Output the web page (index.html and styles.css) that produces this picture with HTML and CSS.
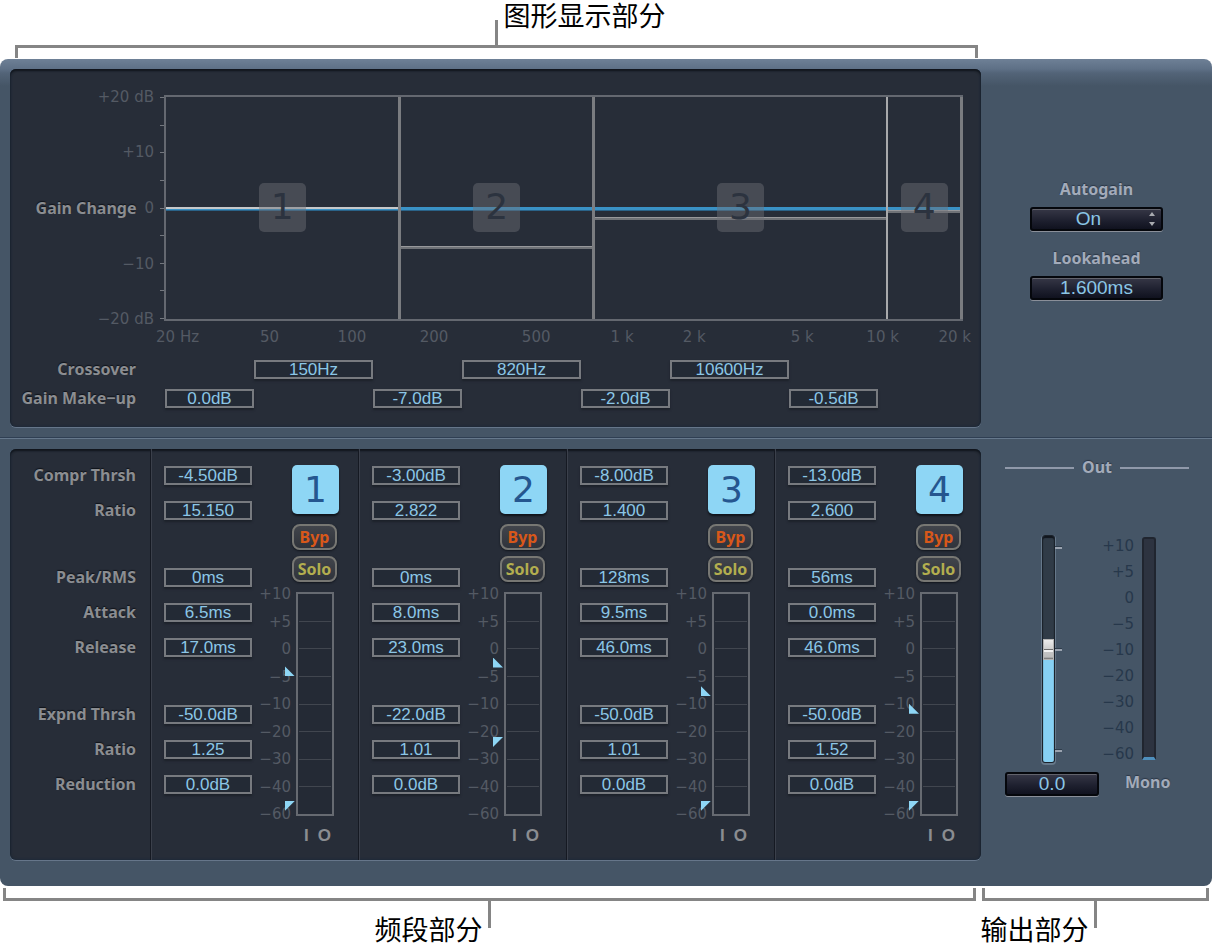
FILE: index.html
```html
<!DOCTYPE html>
<html lang="zh-CN">

<head>
    <meta charset="UTF-8" />
    <meta name="viewport" content="width=device-width, initial-scale=1.0" />
    <title>Multipressor</title>
    <link rel="stylesheet" href="styles.css">
</head>

<body>
    <div class="callout callout-top">
        <div class="callout-text">图形显示部分</div>
        <div class="bracket bracket-down"></div>
    </div>

    <main class="plugin">
        <section class="upper">
            <div class="panel display">
                <div class="graph">
                    <div class="y-axis">
                        <span>+20 dB</span>
                        <span>+10</span>
                        <span class="y-zero"><b class="label">Gain Change</b>0</span>
                        <span>−10</span>
                        <span>−20 dB</span>
                    </div>
                    <div class="ticks"><i></i><i></i><i></i><i></i><i></i><i></i><i></i><i></i><i></i></div>
                    <div class="plot">
                        <div class="zone">
                            <div class="zero-line"></div>
                            <div class="gain-line" style="top: 50%"></div>
                            <span class="zone-number">1</span>
                        </div>
                        <div class="zone">
                            <div class="zero-line"></div>
                            <div class="gain-line" style="top: 67%"></div>
                            <span class="zone-number">2</span>
                        </div>
                        <div class="zone">
                            <div class="zero-line"></div>
                            <div class="gain-line" style="top: 54%"></div>
                            <span class="zone-number">3</span>
                        </div>
                        <div class="zone">
                            <div class="zero-line"></div>
                            <div class="gain-line" style="top: 51%"></div>
                            <span class="zone-number">4</span>
                        </div>
                    </div>
                </div>
                <div class="x-axis">
                    <span>20 Hz</span>
                    <span>50</span>
                    <span>100</span>
                    <span>200</span>
                    <span>500</span>
                    <span>1 k</span>
                    <span>2 k</span>
                    <span>5 k</span>
                    <span>10 k</span>
                    <span>20 k</span>
                </div>
                <div class="settings">
                    <label class="label" id="l-cross" for="cross1">Crossover</label>
                    <input class="field cross1" id="cross1" type="text" value="150Hz">
                    <input class="field cross2" aria-labelledby="l-cross" type="text" value="820Hz">
                    <input class="field cross3" aria-labelledby="l-cross" type="text" value="10600Hz">
                </div>
                <div class="settings">
                    <label class="label" id="l-gain" for="gain1">Gain Make−up</label>
                    <input class="field gain1" id="gain1" type="text" value="0.0dB">
                    <input class="field gain2" aria-labelledby="l-gain" type="text" value="-7.0dB">
                    <input class="field gain3" aria-labelledby="l-gain" type="text" value="-2.0dB">
                    <input class="field gain4" aria-labelledby="l-gain" type="text" value="-0.5dB">
                </div>
            </div>
            <div class="side options">
                <label class="label" for="autogain">Autogain</label>
                <div class="select-wrap">
                    <select class="lcd" id="autogain">
                        <option>On</option>
                        <option>Off</option>
                    </select>
                    <svg class="arrows" viewBox="0 0 6 14" width="6" height="14">
                        <path d="M3 0 L6 4 H0 Z M0 10 H6 L3 14 Z" fill="#a9abb0" />
                    </svg>
                </div>
                <label class="label" for="lookahead">Lookahead</label>
                <input class="lcd" id="lookahead" type="text" value="1.600ms">
            </div>
        </section>

        <section class="lower">
            <div class="panel bands">
                <div class="names">
                    <div class="group">
                        <label class="label" id="l-ct" for="ct1">Compr Thrsh</label>
                        <label class="label" id="l-cr" for="cr1">Ratio</label>
                    </div>
                    <div class="group">
                        <label class="label" id="l-pk" for="pk1">Peak/RMS</label>
                        <label class="label" id="l-at" for="at1">Attack</label>
                        <label class="label" id="l-re" for="re1">Release</label>
                    </div>
                    <div class="group">
                        <label class="label" id="l-et" for="et1">Expnd Thrsh</label>
                        <label class="label" id="l-er" for="er1">Ratio</label>
                        <label class="label" id="l-rd" for="rd1">Reduction</label>
                    </div>
                </div>

                <div class="band">
                    <div class="values">
                        <div class="group">
                            <input class="field" id="ct1" type="text" value="-4.50dB">
                            <input class="field" id="cr1" type="text" value="15.150">
                        </div>
                        <div class="group">
                            <input class="field" id="pk1" type="text" value="0ms">
                            <input class="field" id="at1" type="text" value="6.5ms">
                            <input class="field" id="re1" type="text" value="17.0ms">
                        </div>
                        <div class="group">
                            <input class="field" id="et1" type="text" value="-50.0dB">
                            <input class="field" id="er1" type="text" value="1.25">
                            <input class="field" id="rd1" type="text" value="0.0dB">
                        </div>
                    </div>
                    <div class="strip">
                        <button class="band-on" id="band1">1</button>
                        <button class="pill byp">Byp</button>
                        <button class="pill solo">Solo</button>
                        <div class="level">
                            <div class="scale">
                                <span>+10</span><span>+5</span><span>0</span><span>−5</span><span>−10</span><span>−20</span><span>−30</span><span>−40</span><span>−60</span>
                            </div>
                            <div class="meter">
                                <i></i><i></i><i></i><i></i><i></i><i></i><i></i><i></i>
                                <span class="mark compr" style="top: 37%"></span>
                                <span class="mark expnd" style="top: 94%"></span>
                            </div>
                        </div>
                        <div class="io"><span>I</span><span>O</span></div>
                    </div>
                </div>

                <div class="band">
                    <div class="values">
                        <div class="group">
                            <input class="field" aria-labelledby="l-ct band2" type="text" value="-3.00dB">
                            <input class="field" aria-labelledby="l-cr band2" type="text" value="2.822">
                        </div>
                        <div class="group">
                            <input class="field" aria-labelledby="l-pk band2" type="text" value="0ms">
                            <input class="field" aria-labelledby="l-at band2" type="text" value="8.0ms">
                            <input class="field" aria-labelledby="l-re band2" type="text" value="23.0ms">
                        </div>
                        <div class="group">
                            <input class="field" aria-labelledby="l-et band2" type="text" value="-22.0dB">
                            <input class="field" aria-labelledby="l-er band2" type="text" value="1.01">
                            <input class="field" aria-labelledby="l-rd band2" type="text" value="0.0dB">
                        </div>
                    </div>
                    <div class="strip">
                        <button class="band-on" id="band2">2</button>
                        <button class="pill byp">Byp</button>
                        <button class="pill solo">Solo</button>
                        <div class="level">
                            <div class="scale">
                                <span>+10</span><span>+5</span><span>0</span><span>−5</span><span>−10</span><span>−20</span><span>−30</span><span>−40</span><span>−60</span>
                            </div>
                            <div class="meter">
                                <i></i><i></i><i></i><i></i><i></i><i></i><i></i><i></i>
                                <span class="mark compr" style="top: 33%"></span>
                                <span class="mark expnd" style="top: 65%"></span>
                            </div>
                        </div>
                        <div class="io"><span>I</span><span>O</span></div>
                    </div>
                </div>

                <div class="band">
                    <div class="values">
                        <div class="group">
                            <input class="field" aria-labelledby="l-ct band3" type="text" value="-8.00dB">
                            <input class="field" aria-labelledby="l-cr band3" type="text" value="1.400">
                        </div>
                        <div class="group">
                            <input class="field" aria-labelledby="l-pk band3" type="text" value="128ms">
                            <input class="field" aria-labelledby="l-at band3" type="text" value="9.5ms">
                            <input class="field" aria-labelledby="l-re band3" type="text" value="46.0ms">
                        </div>
                        <div class="group">
                            <input class="field" aria-labelledby="l-et band3" type="text" value="-50.0dB">
                            <input class="field" aria-labelledby="l-er band3" type="text" value="1.01">
                            <input class="field" aria-labelledby="l-rd band3" type="text" value="0.0dB">
                        </div>
                    </div>
                    <div class="strip">
                        <button class="band-on" id="band3">3</button>
                        <button class="pill byp">Byp</button>
                        <button class="pill solo">Solo</button>
                        <div class="level">
                            <div class="scale">
                                <span>+10</span><span>+5</span><span>0</span><span>−5</span><span>−10</span><span>−20</span><span>−30</span><span>−40</span><span>−60</span>
                            </div>
                            <div class="meter">
                                <i></i><i></i><i></i><i></i><i></i><i></i><i></i><i></i>
                                <span class="mark compr" style="top: 46%"></span>
                                <span class="mark expnd" style="top: 94%"></span>
                            </div>
                        </div>
                        <div class="io"><span>I</span><span>O</span></div>
                    </div>
                </div>

                <div class="band">
                    <div class="values">
                        <div class="group">
                            <input class="field" aria-labelledby="l-ct band4" type="text" value="-13.0dB">
                            <input class="field" aria-labelledby="l-cr band4" type="text" value="2.600">
                        </div>
                        <div class="group">
                            <input class="field" aria-labelledby="l-pk band4" type="text" value="56ms">
                            <input class="field" aria-labelledby="l-at band4" type="text" value="0.0ms">
                            <input class="field" aria-labelledby="l-re band4" type="text" value="46.0ms">
                        </div>
                        <div class="group">
                            <input class="field" aria-labelledby="l-et band4" type="text" value="-50.0dB">
                            <input class="field" aria-labelledby="l-er band4" type="text" value="1.52">
                            <input class="field" aria-labelledby="l-rd band4" type="text" value="0.0dB">
                        </div>
                    </div>
                    <div class="strip">
                        <button class="band-on" id="band4">4</button>
                        <button class="pill byp">Byp</button>
                        <button class="pill solo">Solo</button>
                        <div class="level">
                            <div class="scale">
                                <span>+10</span><span>+5</span><span>0</span><span>−5</span><span>−10</span><span>−20</span><span>−30</span><span>−40</span><span>−60</span>
                            </div>
                            <div class="meter">
                                <i></i><i></i><i></i><i></i><i></i><i></i><i></i><i></i>
                                <span class="mark compr" style="top: 54%"></span>
                                <span class="mark expnd" style="top: 94%"></span>
                            </div>
                        </div>
                        <div class="io"><span>I</span><span>O</span></div>
                    </div>
                </div>
            </div>

            <div class="side output">
                <h2 class="label out-title" id="l-out">Out</h2>
                <div class="out-body">
                    <div class="out-fader">
                        <div class="fader-row">
                            <input class="fader" type="range" min="0" max="100" value="50" aria-labelledby="l-out">
                            <div class="fader-ticks"><i></i><i></i><i></i></div>
                        </div>
                        <input class="lcd" type="text" value="0.0" aria-labelledby="l-out">
                    </div>
                    <div class="out-meter">
                        <div class="out-level">
                            <div class="out-scale">
                                <span>+10</span><span>+5</span><span>0</span><span>−5</span><span>−10</span><span>−20</span><span>−30</span><span>−40</span><span>−60</span>
                            </div>
                            <div class="out-bar"></div>
                        </div>
                        <div class="label mono">Mono</div>
                    </div>
                </div>
            </div>
        </section>
    </main>

    <div class="callouts-bottom">
        <div class="callout">
            <div class="bracket bracket-up"></div>
            <div class="callout-text">频段部分</div>
        </div>
        <div class="callout">
            <div class="bracket bracket-up"></div>
            <div class="callout-text">输出部分</div>
        </div>
    </div>
</body>

</html>
```
FILE: styles.css
```css
* {
    box-sizing: border-box;
}

body {
    margin: 0;
    padding-right: 1px;
    background-color: #fff;
    font-family: "DejaVu Sans", sans-serif;
    font-size: 15px;
}

input,
select,
button {
    margin: 0;
    padding: 0;
    font-family: inherit;
}

/* callouts */
.callout-text {
    font-family: "Liberation Sans", "Noto Sans CJK SC", sans-serif;
    font-size: 27px;
    line-height: 34px;
    color: #000;
    white-space: nowrap;
}

.bracket {
    position: relative;
    height: 13px;
    border: 3px solid #858585;
}

.bracket::after {
    content: "";
    position: absolute;
    left: 50%;
    width: 3px;
    margin-left: -2px;
    background-color: #858585;
}

.bracket-down {
    border-bottom: none;
}

.bracket-down::after {
    bottom: 100%;
    height: 28px;
}

.bracket-up {
    border-top: none;
}

.bracket-up::after {
    top: 100%;
    height: 30px;
}

.callout-top {
    width: calc(100% - 249px);
    margin-left: 15px;
    padding-bottom: 1px;
}

.callout-top .callout-text {
    height: 45px;
    padding-left: calc(50% + 7px);
}

.callouts-bottom {
    display: grid;
    grid-template-columns: minmax(0, 1fr) 227px;
    column-gap: 6px;
    padding: 2px 3px 0;
}

.callouts-bottom .callout-text {
    display: flex;
    justify-content: flex-end;
    width: 50%;
    margin-top: 13px;
    padding-right: 7px;
}

/* plugin window */
.plugin {
    border-radius: 8px;
    background: linear-gradient(#6e8096, #5e7086 10px, #536478 14px, #455566 27px) #455566;
    overflow: hidden;
}

.upper,
.lower {
    display: grid;
    grid-template-columns: minmax(0, 1fr) 231px;
    padding-left: 10px;
}

.upper {
    padding-top: 10px;
    padding-bottom: 10px;
    border-bottom: 1px solid #2f3f53;
}

.lower {
    padding-top: 10px;
    padding-bottom: 26px;
    border-top: 1px solid #66788c;
}

.panel {
    border-radius: 6px;
    background-color: #272d38;
    box-shadow: inset 0 2px 2px #11151c, inset 0 0 3px #16273a, 0 1px 0 #66768a;
}

.label {
    font-family: "Noto Sans", sans-serif;
    font-size: 16px;
    font-weight: 700;
    line-height: 19px;
    color: #8b8d91;
    text-shadow: 0 -1px 1px #0f131a;
    white-space: nowrap;
}

.field {
    width: 100%;
    height: 19px;
    border: 2px solid #777a7f;
    background-color: #232a35;
    box-shadow: 0 2px 2px #1c212a;
    font-family: "Liberation Sans", sans-serif;
    font-size: 17px;
    line-height: 15px;
    color: #8bc6e6;
    text-align: center;
}

/* graph */
.display {
    padding: 26px 0 19px;
}

.graph {
    display: grid;
    grid-template-columns: 144px 10px minmax(0, 1fr);
    height: 226px;
    padding-right: 18px;
}

.y-axis {
    display: flex;
    flex-direction: column;
    justify-content: space-between;
    align-items: flex-end;
    margin: -6px 0;
    line-height: 16px;
    color: #545a64;
}

.y-zero {
    display: flex;
    gap: 8px;
    align-items: center;
}

.ticks {
    display: flex;
    flex-direction: column;
    justify-content: space-between;
    align-items: flex-end;
    padding: 2px 0;
}

.ticks i {
    width: 4px;
    height: 1px;
    background-color: #73777e;
}

.plot {
    display: grid;
    grid-template-columns: 236fr 194fr 294fr 75fr;
    border: 2px solid #646870;
    border-right: none;
}

.zone {
    position: relative;
    display: flex;
    justify-content: center;
    align-items: center;
    border-right: 3px solid #7a7c80;
}

.zone:nth-child(3) {
    border-right: 2px solid #a8a9ab;
}

.zero-line,
.gain-line {
    position: absolute;
    left: 0;
    right: 0;
    height: 3px;
}

.zero-line {
    top: 50%;
    height: 4px;
    margin-top: -1px;
    border-bottom: 1px solid #2a6389;
    background-color: #3a92c6;
}

.gain-line {
    border-top: 1px solid #97989b;
    background-color: #6f7277;
}

.zone:first-child .gain-line {
    height: 2px;
    margin-top: -1px;
    border-top: none;
    background-color: #c6c8ca;
}

.zone-number {
    position: relative;
    width: 47px;
    height: 49px;
    margin-bottom: 2px;
    border-radius: 5px;
    background-color: rgba(110, 114, 120, 0.45);
    font-size: 36px;
    line-height: 48px;
    text-align: center;
    color: #2c333f;
}

.x-axis {
    display: grid;
    grid-template-columns: 44fr 80fr 87fr 82fr 102fr 83fr 72fr 108fr 85fr 72fr;
    margin: 8px 10px 15px 145px;
    line-height: 16px;
    color: #545a64;
    text-align: right;
    white-space: nowrap;
}

.settings {
    display: grid;
    grid-template-columns: 126px 29px 89fr 119fr 89fr 119fr 89fr 119fr 89fr 103fr;
}

.settings + .settings {
    margin-top: 10px;
}

.settings .label {
    text-align: right;
}

.settings .field {
    grid-row: 1;
}

.cross1 { grid-column: 4; }
.cross2 { grid-column: 6; }
.cross3 { grid-column: 8; }
.gain1 { grid-column: 3; }
.gain2 { grid-column: 5; }
.gain3 { grid-column: 7; }
.gain4 { grid-column: 9; }

/* right side */
.side .label {
    color: #a3abba;
    text-shadow: 0 -1px 1px #2b3747;
}

.options {
    display: flex;
    flex-direction: column;
    align-items: center;
    padding-top: 111px;
}

.lcd {
    display: block;
    width: 133px;
    height: 24px;
    border: 2px solid #05070c;
    border-radius: 3px;
    background: linear-gradient(#363746, #1f2130 55%, #10121f);
    box-shadow: 0 1px 0 #8a8f99, inset 0 1px 0 #62636c;
    font-family: "Liberation Sans", sans-serif;
    font-size: 19px;
    line-height: 20px;
    color: #8bc6e6;
    text-align: center;
}

.select-wrap {
    position: relative;
    margin: 8px 0 18px;
}

.select-wrap .lcd {
    appearance: none;
    padding-right: 16px;
    text-align-last: center;
}

.arrows {
    position: absolute;
    right: 8px;
    top: 5px;
    pointer-events: none;
}

#lookahead {
    margin-top: 8px;
}

/* bands */
.bands {
    display: grid;
    grid-template-columns: 140px 208fr 208fr 208fr 207fr;
}

.names,
.values {
    display: flex;
    flex-direction: column;
    gap: 48px;
    padding-top: 17px;
}

.names {
    padding-right: 14px;
    text-align: right;
}

.group {
    display: flex;
    flex-direction: column;
    gap: 16px;
}

.band {
    display: flex;
    gap: 4px;
    padding-left: 13px;
    border-left: 1px solid #151922;
    box-shadow: inset 1px 0 0 #3b404b;
}

.values {
    width: 88px;
}

.strip {
    display: flex;
    flex-direction: column;
    align-items: flex-end;
    width: 83px;
    padding: 16px 0 14px;
}

.band-on {
    width: 47px;
    height: 49px;
    border: none;
    border-radius: 5px;
    background-color: #8ed6f5;
    box-shadow: 0 2px 2px #10141b;
    font-size: 36px;
    line-height: 48px;
    color: #25568f;
}

.pill {
    width: 45px;
    height: 26px;
    margin-right: 2px;
    border: 2px solid #777773;
    border-radius: 8px;
    background: linear-gradient(#41444b, #2f333b);
    box-shadow: 0 1px 2px #11151c;
    font-family: "Noto Sans", sans-serif;
    font-size: 16px;
    font-weight: 700;
    line-height: 20px;
}

.byp {
    margin-top: 10px;
    color: #d8581a;
}

.solo {
    margin-top: 6px;
    color: #b3ae4f;
}

.level {
    display: flex;
    gap: 5px;
    margin: 10px 5px 10px 0;
}

.scale {
    display: flex;
    flex-direction: column;
    justify-content: space-between;
    margin: -6px 0;
    line-height: 16px;
    color: #545a64;
    text-align: right;
}

.meter {
    position: relative;
    display: flex;
    flex-direction: column;
    width: 38px;
    height: 224px;
    padding: 0 1px;
    border: 2px solid #666a71;
    background-color: #242a35;
}

.meter i {
    flex: 1;
    border-bottom: 1px solid #41464f;
}

.meter i:last-of-type {
    border-bottom: none;
}

.mark {
    position: absolute;
    left: -13px;
    width: 10px;
    height: 10px;
    background-color: #8ed6f5;
}

.compr {
    clip-path: polygon(0 0, 100% 100%, 0 100%);
    margin-top: -9px;
}

.expnd {
    clip-path: polygon(0 0, 100% 0, 0 100%);
}

.io {
    display: flex;
    gap: 9px;
    margin-right: 8px;
    line-height: 20px;
    font-family: "Liberation Sans", sans-serif;
    font-size: 17px;
    font-weight: 700;
    color: #8b8d91;
}

/* output */
.output {
    padding: 9px 23px 0 24px;
}

.out-title {
    display: flex;
    align-items: center;
    gap: 8px;
    margin: 0 0 58px;
}

.out-title::before,
.out-title::after {
    content: "";
    flex: 1;
    height: 2px;
    background-color: #9099aa;
}

.out-body {
    display: flex;
}

.out-fader {
    width: 94px;
}

.out-fader .lcd {
    width: 100%;
    margin-top: 9px;
}

.fader-row {
    display: flex;
    justify-content: center;
    height: 228px;
}

.fader {
    appearance: none;
    writing-mode: vertical-lr;
    direction: rtl;
    width: 13px;
    height: 228px;
    border: 1px solid #1b222b;
    border-radius: 3px;
    background: linear-gradient(#303b47 50%, #87d0f3 50%);
    box-shadow: 0 1px 0 1px #66788a, inset 0 2px 1px #11161d;
}

.fader::-webkit-slider-thumb {
    appearance: none;
    width: 11px;
    height: 21px;
    border: 1px solid #b4b4b4;
    background: linear-gradient(#ececec, #cfcfcf 9px, #6e6e6e 9px, #6e6e6e 10px, #f2f2f2 10px, #f2f2f2 12px, #c4c4c4 12px, #bdbdbd 17px, #6b6b6b);
}

.fader-ticks {
    display: flex;
    flex-direction: column;
    justify-content: space-between;
    padding: 11px 0;
}

.fader-ticks i {
    width: 7px;
    height: 3px;
    border-top: 1px solid #2f3d4c;
    background-color: #9aa3b0;
}

.out-level {
    display: flex;
    gap: 8px;
    margin-top: -2px;
}

.out-scale {
    display: flex;
    flex-direction: column;
    width: 35px;
    line-height: 26px;
    color: #27384b;
    text-align: right;
}

.out-bar {
    width: 14px;
    height: 223px;
    margin-top: 4px;
    border: 2px solid #20252f;
    border-bottom: 3px solid #4f8fbd;
    border-radius: 3px 3px 0 0;
    background-color: #2d3340;
}

.mono {
    margin-top: 6px;
    padding-left: 26px;
}
```
